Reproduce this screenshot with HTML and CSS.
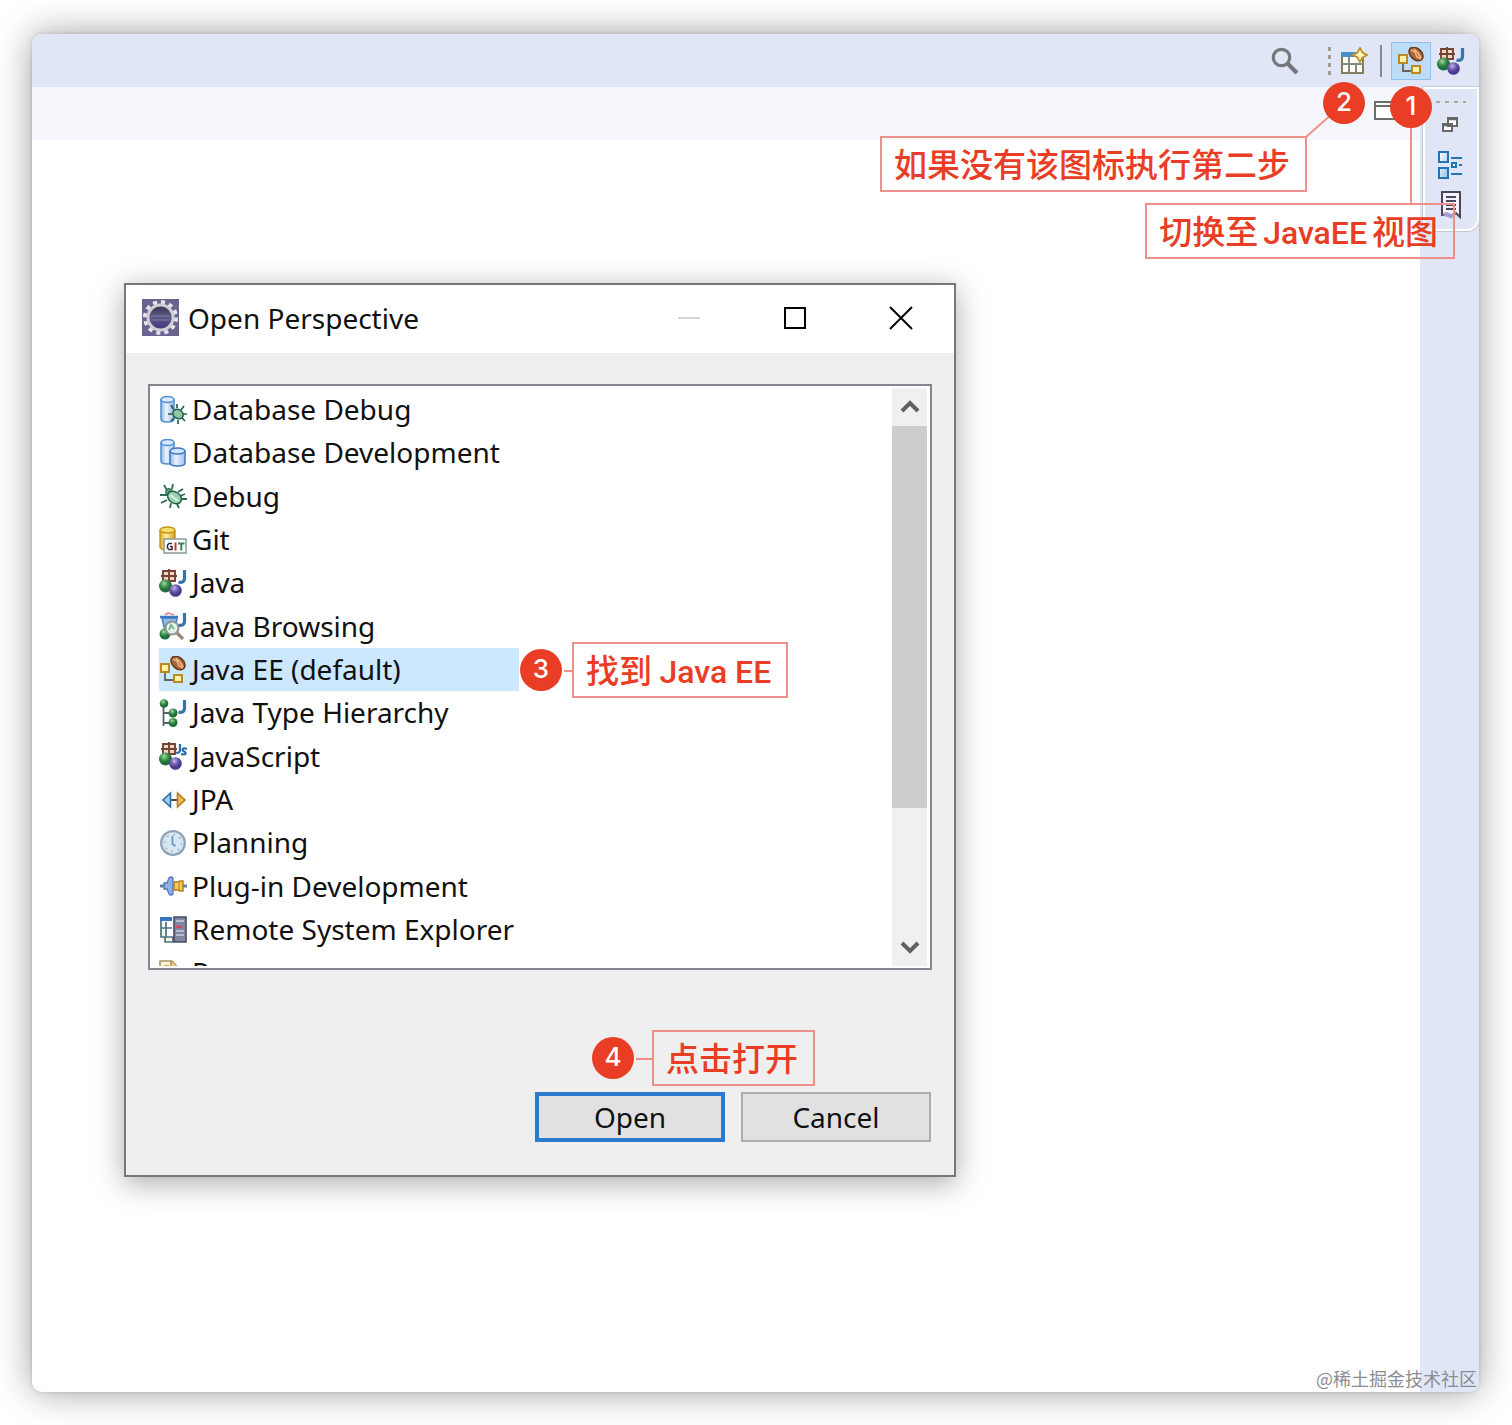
FILE: index.html
```html
<!DOCTYPE html>
<html lang="zh-CN">
<head>
<meta charset="utf-8">
<title>Open Perspective</title>
<meta name="viewport" content="width=device-width, initial-scale=1">
<link rel="stylesheet" href="styles.css">
</head>
<body>
<svg class="sprite" aria-hidden="true">
  <defs>
    <linearGradient id="g-blue"><stop offset="0" stop-color="#8fb4e4"/><stop offset=".4" stop-color="#eaf4ff"/><stop offset="1" stop-color="#9fc0ee"/></linearGradient>
    <linearGradient id="g-gold"><stop offset="0" stop-color="#e0a820"/><stop offset=".4" stop-color="#fff3a0"/><stop offset="1" stop-color="#d99a1c"/></linearGradient>
    <radialGradient id="g-green" cx=".4" cy=".3"><stop offset="0" stop-color="#a5d8a8"/><stop offset=".6" stop-color="#3c8f4c"/><stop offset="1" stop-color="#1f6d38"/></radialGradient>
    <radialGradient id="g-purple" cx=".4" cy=".3"><stop offset="0" stop-color="#c3b6ea"/><stop offset=".6" stop-color="#6f5bb0"/><stop offset="1" stop-color="#4c3b8c"/></radialGradient>
    <linearGradient id="g-sky" x2="1" y2="1"><stop offset="0" stop-color="#fff"/><stop offset="1" stop-color="#8fc3ea"/></linearGradient>
    <linearGradient id="g-lens" x2="0" y2="1"><stop offset="0" stop-color="#34304f"/><stop offset=".45" stop-color="#5d5a86"/><stop offset="1" stop-color="#44367f"/></linearGradient>
  </defs>
  <symbol id="bug" viewBox="0 0 28 28">
    <path d="M8 8 5 3M13 7l1-5M19 10l5-3M8 13H1M8 18l-6 3M12 21l-1 5M18 22l2 4M22 17h6M21 14l5-2" fill="none" stroke="#2d6a58" stroke-width="1.8"/>
    <circle cx="10" cy="10" r="3.4" fill="#5c9c7c" stroke="#24604c"/>
    <ellipse cx="15.500" cy="15.500" rx="7.500" ry="5.500" transform="rotate(35 15.500 15.500)" fill="#9bd3b0" stroke="#24604c" stroke-width="1.500"/>
    <path d="m11 13 8 6" stroke="#d9f3e2" stroke-width="2"/>
  </symbol>
  <symbol id="db-debug" viewBox="0 0 28 28">
    <path d="M2 3v20c0 4 13 4 13 0V3" fill="url(#g-blue)" stroke="#4f8fcf" stroke-width="1.500"/>
    <ellipse cx="8.500" cy="3.500" rx="6.500" ry="3" fill="#d9eaff" stroke="#4f8fcf" stroke-width="1.500"/>
    <path d="M14 13 12 9M18 12V8M22 14l3-4M14 18H9M15 22l-3 3M19 24v4M23 22l3 3M24 18h4" fill="none" stroke="#245f4b" stroke-width="1.700"/>
    <ellipse cx="19" cy="18" rx="5.500" ry="4.500" transform="rotate(35 19 18)" fill="#8cc9a2" stroke="#24604c" stroke-width="1.500"/>
  </symbol>
  <symbol id="db-dev" viewBox="0 0 28 28">
    <path d="M2 3v19c0 4 13 4 13 0V3" fill="url(#g-blue)" stroke="#4f8fcf" stroke-width="1.500"/>
    <ellipse cx="8.500" cy="3.500" rx="6.500" ry="3" fill="#d9eaff" stroke="#4f8fcf" stroke-width="1.500"/>
    <path d="M11 12v12c0 4 15 4 15 0V12" fill="url(#g-blue)" stroke="#3f78c2" stroke-width="1.500"/>
    <ellipse cx="18.500" cy="12" rx="7.500" ry="3" fill="#cfe4ff" stroke="#3f78c2" stroke-width="1.500"/>
  </symbol>
  <symbol id="git" viewBox="0 0 28 28">
    <path d="M1 4v17c0 4 15 4 15 0V4" fill="url(#g-gold)" stroke="#c4931e" stroke-width="1.400"/>
    <ellipse cx="8.500" cy="4" rx="7.500" ry="3" fill="#f8dd68" stroke="#c4931e" stroke-width="1.400"/>
    <path d="M5 13h22v14H5z" fill="#fff" stroke="#8d9a98" stroke-width="1.500"/>
    <path d="M13 17.500H10L8.500 19v3l1.500 1.500h3V20.500h-2" fill="none" stroke="#2b3137" stroke-width="1.500"/>
    <path d="M16.500 16.500V24.500" stroke="#d22c2c" stroke-width="2"/>
    <path d="M19 17.500H25.500M22.300 17v7.500" stroke="#2f8a4b" stroke-width="2"/>
  </symbol>
  <symbol id="java-base" viewBox="0 0 28 28">
    <path d="M4 2h12v10H4zM2 7h16M10 0v14" fill="#f0d9b6" stroke="#74423a" stroke-width="1.900"/>
    <circle cx="6.500" cy="17" r="6.500" fill="url(#g-green)"/>
    <circle cx="16.500" cy="21.500" r="6.300" fill="url(#g-purple)"/>
  </symbol>
  <symbol id="letter-mark" viewBox="0 0 28 28"><path d="M25.500 1v8c0 4-3 5-6 4" fill="none" stroke="#3674ad" stroke-width="3.200"/></symbol>
  <symbol id="java" viewBox="0 0 28 28">
    <use href="#java-base"/><use href="#letter-mark"/>
  </symbol>
  <symbol id="js" viewBox="0 0 28 28">
    <use href="#java-base"/>
    <path d="M21 2v6c0 3-2 3-4 2.500M28 7c-4-2-6 1-3 2.500s2 4-3 2.500" fill="none" stroke="#2b6cab" stroke-width="2.200"/>
  </symbol>
  <symbol id="browse" viewBox="0 0 28 28">
    <path d="M3 6h15l-2 13H6z" fill="#90b8e8" stroke="#477fbd" stroke-width="1.500"/>
    <path d="M1 5h18" stroke="#3c78bd" stroke-width="2.500"/><path d="m6 3 3-2 6 2" fill="none" stroke="#d88b8b" stroke-width="1.800"/>
    <circle cx="6" cy="22" r="5.500" fill="url(#g-green)"/>
    <circle cx="13" cy="16" r="6.500" fill="#e7f4e9" stroke="#8b938f" stroke-width="2"/>
    <path d="m10 18 2-5 3 4" fill="none" stroke="#72b489" stroke-width="2"/>
    <path d="m18 21 6 6" stroke="#98867f" stroke-width="3.200"/><use href="#letter-mark"/>
  </symbol>
  <symbol id="javaee" viewBox="0 0 28 28">
    <path d="M6 14v10h9" fill="none" stroke="#66635b" stroke-width="1.800"/>
    <path d="M2 8h8v8H2zM15 19h8v7h-8z" fill="#fff1a6" stroke="#bc8a22" stroke-width="2"/>
    <ellipse cx="19" cy="7" rx="8" ry="5.500" transform="rotate(42 19 7)" fill="#a86638" stroke="#683817" stroke-width="1.500"/>
    <path d="m14 3 4 2 2 5 4 2M17 2l4 4 3 5" fill="none" stroke="#efb583" stroke-width="1.700"/>
  </symbol>
  <symbol id="hierarchy" viewBox="0 0 28 28">
    <path d="M4.500 6v21M5 14h8M5 24h8" fill="none" stroke="#56646b" stroke-width="1.800"/>
    <circle cx="5" cy="4.500" r="4.300" fill="url(#g-green)"/><circle cx="14" cy="14" r="4.500" fill="url(#g-green)"/><circle cx="14" cy="23.500" r="4.500" fill="url(#g-green)"/>
    <use href="#letter-mark"/>
  </symbol>
  <symbol id="jpa" viewBox="0 0 28 28">
    <path d="M11 14h7" stroke="#4a4a4a" stroke-width="2"/>
    <path d="M11.500 7v14L4 14z" fill="#a6ccf2" stroke="#2f6cab" stroke-width="1.600"/>
    <path d="M18.500 7v14l7.500-7z" fill="#f2bb50" stroke="#b77a1f" stroke-width="1.600"/>
  </symbol>
  <symbol id="clock" viewBox="0 0 28 28">
    <circle cx="14" cy="14" r="11.800" fill="#d7e8f4" stroke="#8fa3b8" stroke-width="2.300"/>
    <circle cx="14" cy="14" r="8.500" fill="none" stroke="#8fa9c0" stroke-width="1.500" stroke-dasharray="1.500 5.200"/>
    <path d="M13.500 7v8l3 2" fill="none" stroke="#6c93b8" stroke-width="1.800"/>
  </symbol>
  <symbol id="plug" viewBox="0 0 28 28">
    <path d="M1 14h5M23 14h5" stroke="#6a7f9c" stroke-width="3"/>
    <path d="M5 11h3l2-5q2-2 4 0v16q-2 2-4 0l-2-5H5z" fill="#8fb0e6" stroke="#5277b4" stroke-width="1.300"/>
    <path d="M15 10h4l2-1h3v10h-3l-2-1h-4z" fill="#f6cb58" stroke="#b77e1c" stroke-width="1.500"/><path d="M20 10v8" stroke="#b77e1c"/>
  </symbol>
  <symbol id="remote" viewBox="0 0 28 28">
    <path d="M1 3h12" stroke="#3775b8" stroke-width="4"/>
    <path d="M2 5v16h12v5H6v-5M2 12h11M7 6v15" fill="#f5f5d7" stroke="#4b7384" stroke-width="1.700"/>
    <path d="M15 1h12v25H15z" fill="#8286a0" stroke="#4a4d63" stroke-width="1.600"/>
    <path d="M17 5h8M17 15h8M17 19h8" stroke="#b9bccb" stroke-width="1.800"/><path d="M17 11h6" stroke="#cf4762" stroke-width="2"/>
  </symbol>
  <symbol id="resource" viewBox="0 0 28 28">
    <path d="M1 2h12l6 7v17H1z" fill="#faf3dc" stroke="#ab9467" stroke-width="1.600"/>
    <path d="M12 2v7h7M5 7h5" fill="#eed395" stroke="#b88936" stroke-width="1.500"/>
  </symbol>
  <symbol id="search" viewBox="0 0 28 28">
    <circle cx="10.500" cy="10.500" r="8.200" fill="none" stroke="#75797e" stroke-width="3.200"/><path d="m16.500 16.500 9.500 9.500" stroke="#75797e" stroke-width="4.200"/>
  </symbol>
  <symbol id="new-perspective" viewBox="0 0 28 28">
    <path d="M2 6h21v20H2z" fill="#fffdf2" stroke="#857d5c" stroke-width="2"/>
    <path d="M1 5h16v5H1z" fill="#4a90cc"/><path d="M9 10v16M2 17h21M16 17v9" fill="none" stroke="#7d8c86" stroke-width="2"/>
    <path d="m20 1 2.500 4.500L27 8l-4.500 2.500L20 15l-2.500-4.500L13 8l4.500-2.500z" fill="#fff6bd" stroke="#c08d22" stroke-width="1.700"/>
  </symbol>
  <symbol id="outline" viewBox="0 0 28 28">
    <path d="M2 1h9v10H2zM2 17h9v10H2z" fill="url(#g-sky)" stroke="#2373b4" stroke-width="2"/>
    <path d="M14 7h11M14 23h11M22 14h3" stroke="#2373b4" stroke-width="2"/><path d="M15 12h4v4h-4z" fill="#fff" stroke="#2373b4" stroke-width="2"/>
  </symbol>
  <symbol id="doc" viewBox="0 0 28 28">
    <path d="M5 1h18v25l-4-4-5 4-4-3-5 1z" fill="#f3f1fb" stroke="#4a4757" stroke-width="2"/>
    <path d="M9 6h10M9 10h10M9 14h10M9 18h10" stroke="#4a4757" stroke-width="2"/><path d="m6 22 4-1 4 2 5-3-1 5-4 2-7-2z" fill="#a99dcf"/>
  </symbol>
  <symbol id="restore" viewBox="0 0 28 28">
    <path d="M11 7h9v8h-9zM6 13h9v7H6z" fill="#fff" stroke="#686868" stroke-width="2"/><path d="M10 8h11M5 14h11" stroke="#686868" stroke-width="2.500"/>
  </symbol>
  <symbol id="eclipse" viewBox="0 0 37 37">
    <path d="M0 0h37v37H0z" fill="#6a6390"/>
    <circle cx="18.500" cy="18.500" r="15.500" fill="none" stroke="#e5e3e8" stroke-width="4" stroke-dasharray="4.100 4.016"/>
    <circle cx="18.500" cy="18.500" r="12.500" fill="url(#g-lens)" stroke="#d0ced5" stroke-width="3"/>
    <path d="M9 17h19M9 21h19" stroke="#6f6d98" stroke-width="1.500"/>
  </symbol>
</svg>

<main class="app">
  <header class="toolbar">
    <button class="tool search" aria-label="Search"><svg><use href="#search"/></svg></button>
    <span class="grip grip-v"></span>
    <button class="tool" aria-label="Open Perspective"><svg><use href="#new-perspective"/></svg></button>
    <span class="divider"></span>
    <button class="tool active" aria-label="Java EE"><svg><use href="#javaee"/></svg></button>
    <button class="tool" aria-label="Java"><svg><use href="#java"/></svg></button>
  </header>

  <div class="workspace">
    <section class="editor">
      <div class="tabs"><button class="maximize" aria-label="Maximize"></button></div>
    </section>
    <aside class="trim">
      <div class="trim-stack">
        <span class="grip grip-h"></span>
        <button class="tool" aria-label="Restore"><svg><use href="#restore"/></svg></button>
        <button class="tool" aria-label="Outline"><svg><use href="#outline"/></svg></button>
        <button class="tool" aria-label="Task List"><svg><use href="#doc"/></svg></button>
      </div>
    </aside>
  </div>

  <section class="dialog" role="dialog" aria-labelledby="dialog-title">
    <header class="titlebar">
      <svg class="logo"><use href="#eclipse"/></svg>
      <h1 id="dialog-title">Open Perspective</h1>
      <button class="winbtn" aria-label="Minimize" disabled><svg viewBox="0 0 24 24"><path d="M1 12h22" stroke="#d4d4d4" stroke-width="2"/></svg></button>
      <button class="winbtn" aria-label="Maximize"><svg viewBox="0 0 24 24"><path d="M2 2h20v20H2z" fill="none" stroke="#000" stroke-width="2"/></svg></button>
      <button class="winbtn" aria-label="Close"><svg viewBox="0 0 24 24"><path d="m1 1 22 22M23 1 1 23" stroke="#000" stroke-width="2"/></svg></button>
    </header>
    <div class="dialog-body">
      <div class="listbox">
        <div class="options" role="listbox" aria-labelledby="dialog-title">
          <button class="option" role="option"><svg><use href="#db-debug"/></svg>Database Debug</button>
          <button class="option" role="option"><svg><use href="#db-dev"/></svg>Database Development</button>
          <button class="option" role="option"><svg><use href="#bug"/></svg>Debug</button>
          <button class="option" role="option"><svg><use href="#git"/></svg>Git</button>
          <button class="option" role="option"><svg><use href="#java"/></svg>Java</button>
          <button class="option" role="option"><svg><use href="#browse"/></svg>Java Browsing</button>
          <button class="option selected" role="option" aria-selected="true"><svg><use href="#javaee"/></svg>Java EE (default)</button>
          <button class="option" role="option"><svg><use href="#hierarchy"/></svg>Java Type Hierarchy</button>
          <button class="option" role="option"><svg><use href="#js"/></svg>JavaScript</button>
          <button class="option" role="option"><svg><use href="#jpa"/></svg>JPA</button>
          <button class="option" role="option"><svg><use href="#clock"/></svg>Planning</button>
          <button class="option" role="option"><svg><use href="#plug"/></svg>Plug-in Development</button>
          <button class="option" role="option"><svg><use href="#remote"/></svg>Remote System Explorer</button>
          <button class="option" role="option"><svg><use href="#resource"/></svg>Resource</button>
        </div>
        <div class="scrollbar">
          <button class="arrow" aria-label="Scroll up"><svg viewBox="0 0 20 20"><path d="m2 14 8-8 8 8" fill="none" stroke="#606060" stroke-width="4"/></svg></button>
          <div class="track"><div class="thumb"></div></div>
          <button class="arrow" aria-label="Scroll down"><svg viewBox="0 0 20 20"><path d="m2 6 8 8 8-8" fill="none" stroke="#606060" stroke-width="4"/></svg></button>
        </div>
      </div>
      <footer class="actions">
        <button class="btn primary">Open</button>
        <button class="btn">Cancel</button>
      </footer>
    </div>
    <div class="step step-3"><span class="badge">3</span><span class="note">找到 <span class="latin">Java EE</span></span></div>
    <div class="step step-4"><span class="badge">4</span><span class="note">点击打开</span></div>
  </section>

  <svg class="leader" viewBox="0 0 30 30" aria-hidden="true"><path d="M1 28 28 4" stroke="#ee8f8a" stroke-width="2"/></svg>
  <span class="stem"></span>
  <span class="note note-2">如果没有该图标执行第二步</span>
  <span class="note note-1">切换至<span class="latin spaced">JavaEE</span>视图</span>
  <span class="badge badge-2">2</span>
  <span class="badge badge-1">1</span>
  <span class="watermark">@稀土掘金技术社区</span>
</main>
</body>
</html>
```

FILE: styles.css
```css
* { box-sizing: border-box; }

:root {
  --trim: #e0e6f6;
  --red: #e93d25;
  --note-line: #ee8f8a;
  --ui: "Noto Sans", "Open Sans", sans-serif;
  --cjk: "Noto Sans CJK SC", sans-serif;
}

body {
  margin: 0;
  min-height: 100vh;
  display: flex;
  padding: 34px 33px 33px 32px;
  background: #fff;
  font-family: var(--ui);
  color: #111;
}

button {
  margin: 0;
  padding: 0;
  border: 0;
  background: none;
  font: inherit;
  color: inherit;
}

.sprite { position: absolute; width: 0; height: 0; }

.app {
  position: relative;
  flex: 1;
  display: flex;
  flex-direction: column;
  border-radius: 10px;
  background: #fff;
  box-shadow: 0 0 4px rgba(0, 0, 0, .15), 0 0 36px rgba(0, 0, 0, .38);
}

/* Toolbar */
.toolbar {
  display: flex;
  align-items: center;
  justify-content: flex-end;
  height: 53px;
  padding-right: 8px;
  border-radius: 10px 10px 0 0;
  background: var(--trim);
}

.tool {
  display: grid;
  place-items: center;
  width: 40px;
  height: 38px;
}

.tool svg { width: 28px; height: 28px; }
.search { margin-right: 23px; }
.tool.active { border: 1px solid #92c0ee; background: #bcdcf8; }

.grip-v {
  width: 3px;
  height: 28px;
  margin-right: 3px;
  background: repeating-linear-gradient(#a09f96 0 4px, transparent 4px 8px);
}

.divider { width: 2px; height: 32px; margin: 0 9px 0 6px; background: #838894; }

/* Workspace */
.workspace { flex: 1; display: flex; }
.editor { flex: 1; }

.tabs {
  display: flex;
  justify-content: flex-end;
  height: 53px;
  padding: 14px 24px 0 0;
  background: #f6f7fc;
}

.maximize {
  width: 22px;
  height: 19px;
  border: 2px solid #6c6c6c;
  background: linear-gradient(#fff 2px, #6c6c6c 2px 4px, #fff 4px);
}

.trim {
  width: 59px;
  padding-left: 3px;
  border-radius: 0 0 10px;
  background: var(--trim);
}

.trim-stack {
  display: flex;
  flex-direction: column;
  align-items: center;
  height: 144px;
  padding-top: 12px;
  border: 2px solid #fff;
  border-radius: 0 0 12px;
  box-shadow: 0 0 0 1px #c3c8d8;
}

.trim-stack .tool { height: 40px; }

.grip-h {
  width: 30px;
  height: 2px;
  margin-bottom: 2px;
  flex: none;
  background: repeating-linear-gradient(90deg, #aaa99c 0 4px, transparent 4px 9px);
}

/* Dialog */
.dialog {
  position: absolute;
  left: 92px;
  top: 249px;
  width: 832px;
  border: 2px solid #777;
  background: #efefef;
  box-shadow: 0 6px 28px rgba(0, 0, 0, .34);
  font-size: 28px;
}

.titlebar {
  display: flex;
  align-items: center;
  height: 68px;
  padding: 0 0 3px 16px;
  background: #fff;
}

.logo { width: 37px; height: 37px; margin-right: 9px; }
.titlebar h1 { flex: 1; margin: 0; font-size: 28px; font-weight: 400; }
.winbtn { display: grid; place-items: center; width: 106px; height: 64px; }
.winbtn svg { width: 24px; height: 24px; }

.dialog-body { padding: 31px 22px 33px; }

.listbox {
  display: flex;
  height: 586px;
  padding: 2px 3px 2px 9px;
  border: 2px solid #828790;
  background: #fff;
}

.options {
  flex: 1;
  display: grid;
  grid-auto-rows: 43px 43px 44px;
  justify-content: start;
  grid-template-columns: 360px;
  overflow: hidden;
}

.option {
  display: flex;
  align-items: center;
  gap: 5px;
  line-height: 43px;
  text-align: left;
  white-space: nowrap;
}

.option svg { flex: none; width: 28px; height: 28px; }
.option.selected { background: #cce8ff; }

.scrollbar { display: flex; flex-direction: column; width: 35px; background: #f0f0f0; }
.arrow { display: grid; place-items: center; height: 38px; }
.arrow svg { width: 20px; height: 20px; }
.track { flex: 1; }
.thumb { height: 76%; background: #cdcdcd; }

.actions {
  display: flex;
  justify-content: flex-end;
  gap: 16px;
  margin-top: 122px;
  padding-right: 1px;
}

.btn {
  width: 190px;
  height: 50px;
  border: 2px solid #adadad;
  background: #e1e1e1;
}

.btn.primary { border: 4px solid #2a7bd0; }

/* Numbered steps */
.badge {
  display: grid;
  place-items: center;
  width: 42px;
  height: 42px;
  padding-bottom: 2px;
  border-radius: 50%;
  background: var(--red);
  color: #fff;
  font: 500 26px/1 Inter, sans-serif;
}

.note {
  height: 56px;
  padding: 0 15px 0 12px;
  border: 2px solid var(--note-line);
  color: var(--red);
  font: 500 33px/50px var(--cjk);
  white-space: nowrap;
}

.latin { font: 500 32px/50px Roboto, sans-serif; }
.spaced { margin: 0 5px; }

.step { position: absolute; display: flex; align-items: center; }
.step .note { position: relative; }
.step .note::before {
  content: "";
  position: absolute;
  right: 100%;
  top: 26px;
  height: 2px;
  background: var(--note-line);
}

.step-3 { left: 394px; top: 357px; gap: 10px; }
.step-3 .note::before { width: 10px; }
.step-4 { left: 466px; top: 745px; gap: 18px; }
.step-4 .note::before { width: 18px; }

.note-1, .note-2, .badge-1, .badge-2, .leader, .stem, .watermark { position: absolute; }
.note-1 { right: 24px; top: 169px; }
.note-2 { right: 172px; top: 102px; }
.badge-1 { right: 47px; top: 52px; }
.badge-2 { right: 114px; top: 48px; }
.leader { right: 144px; top: 75px; width: 30px; height: 30px; }
.stem { right: 67px; top: 90px; width: 2px; height: 80px; background: var(--note-line); }

.watermark {
  right: 2px;
  bottom: 0;
  color: #8b8d94;
  font: 18px/27px var(--cjk);
}
```
